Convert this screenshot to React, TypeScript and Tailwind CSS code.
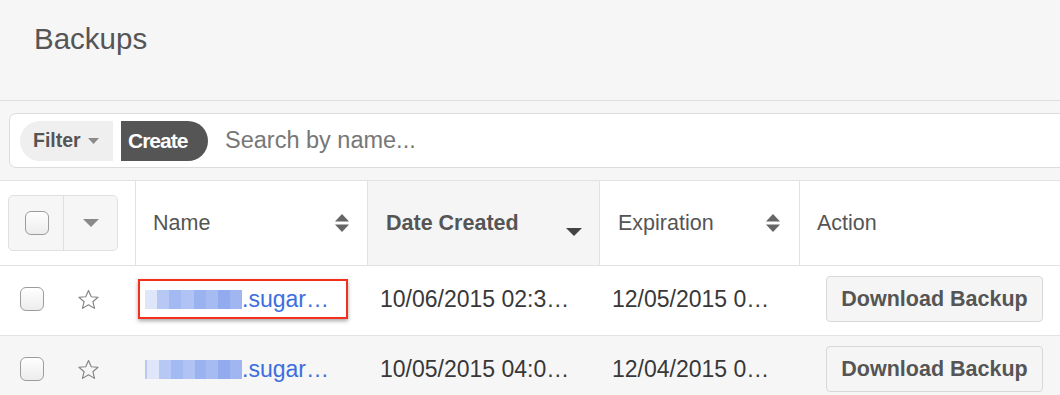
import React from 'react';

const SortIcon: React.FC = () => (
    <svg width="16" height="20" viewBox="0 0 16 20" className="shrink-0">
        <polygon points="8,1 15,8.5 1,8.5" fill="#666" />
        <polygon points="1,11.5 15,11.5 8,19" fill="#666" />
    </svg>
);

const Checkbox: React.FC = () => (
    <span className="block w-[24px] h-[24px] rounded-[6px] border border-[#9c9c9c] bg-gradient-to-b from-white to-[#ececec] shadow-[inset_0_1px_0_#fff]" />
);

const Star: React.FC = () => (
    <svg width="23" height="21" viewBox="0 0 24 22">
        <polygon
            points="12,1.5 14.9,8.1 22,8.6 16.6,13.3 18.3,20.3 12,16.6 5.7,20.3 7.4,13.3 2,8.6 9.1,8.1"
            fill="none"
            stroke="#858585"
            strokeWidth="1.2"
            strokeLinejoin="round"
        />
    </svg>
);

// blurred-out host name, drawn as soft pixel blocks
const blocks = ['#dfe6fa', '#b7c8f4', '#a3b9f2', '#b0c3f4', '#9ab2f0', '#a6bbf2', '#92abee', '#a0b6f1'];

const Blurred: React.FC<{ edge?: boolean }> = ({ edge }) => (
    <span className={`inline-flex h-[19px] w-[97px] blur-[0.5px] ${edge ? 'border-l-2 border-[#b9c8f4]' : ''}`}>
        {blocks.map((c, i) => (
            <span key={i} className="flex-1 h-full" style={{ backgroundColor: c }} />
        ))}
    </span>
);

const rows = [
    { created: '10/06/2015 02:3…', expires: '12/05/2015 0…', marked: true },
    { created: '10/05/2015 04:0…', expires: '12/04/2015 0…', marked: false },
];

export default function App() {
    return (
        <div className="w-[1060px] h-[395px] overflow-hidden bg-[#f6f6f6] font-['Liberation_Sans',Arial,sans-serif]">
            {/* page title */}
            <div className="h-[101px] border-b border-[#dedede] pl-[34px] pt-[19px]">
                <h1 className="text-[29.5px] leading-[40px] text-[#555]">Backups</h1>
            </div>

            {/* filter bar */}
            <div className="pt-[12px] pb-[12px] pl-[9px]">
                <div className="h-[55px] w-[1070px] bg-white border border-[#dcdcdc] rounded-[7px] flex items-center pl-[10px]">
                    <div className="h-[40px] w-[93px] bg-[#efefef] rounded-l-[20px] flex items-center pl-[13px] gap-[7px]">
                        <span className="text-[19.5px] font-bold text-[#555]">Filter</span>
                        <svg width="11" height="6" viewBox="0 0 11 6"><polygon points="0,0 11,0 5.5,6" fill="#8a8a8a" /></svg>
                    </div>
                    <div className="h-[40px] w-[87px] ml-[8px] bg-[#555] rounded-r-[20px] flex items-center pl-[7px]">
                        <span className="text-[21px] font-bold text-white tracking-[-1px]">Create</span>
                    </div>
                    <span className="ml-[17px] text-[23.5px] text-[#777]">Search by name...</span>
                </div>
            </div>

            {/* table */}
            <div className="bg-white">
                <div className="grid grid-cols-[136px_232px_232px_200px_260px] h-[86px] border-y border-[#e2e2e2] text-[21.5px] text-[#555]">
                    <div className="border-r border-[#e2e2e2] flex items-center pl-[8px]">
                        <div className="flex h-[56px] w-[110px] rounded-[5px] border border-[#e0e0e0] bg-[#f6f6f6]">
                            <div className="w-[55px] border-r border-[#e0e0e0] flex items-center justify-center pl-[2px]">
                                <Checkbox />
                            </div>
                            <div className="flex-1 flex items-center justify-center">
                                <svg width="16" height="8" viewBox="0 0 16 8"><polygon points="0,0 16,0 8,8" fill="#8a8a8a" /></svg>
                            </div>
                        </div>
                    </div>
                    <div className="border-r border-[#e2e2e2] flex items-center justify-between pl-[17px] pr-[17px]">
                        <span>Name</span>
                        <SortIcon />
                    </div>
                    <div className="border-r border-[#e2e2e2] bg-[#f5f5f5] flex items-center justify-between pl-[18px] pr-[17px]">
                        <span className="font-bold">Date Created</span>
                        <svg width="16" height="8" viewBox="0 0 16 8" className="mt-[18px]"><polygon points="0,0 16,0 8,8" fill="#444" /></svg>
                    </div>
                    <div className="border-r border-[#e2e2e2] flex items-center justify-between pl-[18px] pr-[18px]">
                        <span>Expiration</span>
                        <SortIcon />
                    </div>
                    <div className="flex items-center pl-[17px]">
                        <span>Action</span>
                    </div>
                </div>

                {rows.map((r, i) => (
                    <div
                        key={i}
                        className={`grid grid-cols-[136px_232px_232px_200px_260px] h-[70px] pb-[3px] border-b border-[#e2e2e2] text-[23px] ${i % 2 ? 'bg-[#f6f6f6]' : 'bg-white'}`}
                    >
                        <div className="flex items-center pl-[20px] gap-[33px]">
                            <Checkbox />
                            <Star />
                        </div>
                        <div className="flex items-center pl-[2px]">
                            <span
                                className={`inline-flex items-center h-[40px] w-[210px] pl-[5px] border-2 ${r.marked ? 'border-[#f4301c] shadow-[0_2px_4px_rgba(0,0,0,0.35)]' : 'border-transparent'}`}
                            >
                                <Blurred edge={!r.marked} />
                                <span className="text-[#3d6ee0]">.sugar…</span>
                            </span>
                        </div>
                        <div className="flex items-center pl-[12px] text-[#383838]">{r.created}</div>
                        <div className="flex items-center pl-[12px] text-[#383838]">{r.expires}</div>
                        <div className="flex items-center pl-[26px]">
                            <button className="h-[46px] w-[217px] rounded-[4px] border border-[#d8d8d8] bg-[#f5f5f5] text-[21.5px] font-bold text-[#555]">
                                Download Backup
                            </button>
                        </div>
                    </div>
                ))}
            </div>
        </div>
    );
}
